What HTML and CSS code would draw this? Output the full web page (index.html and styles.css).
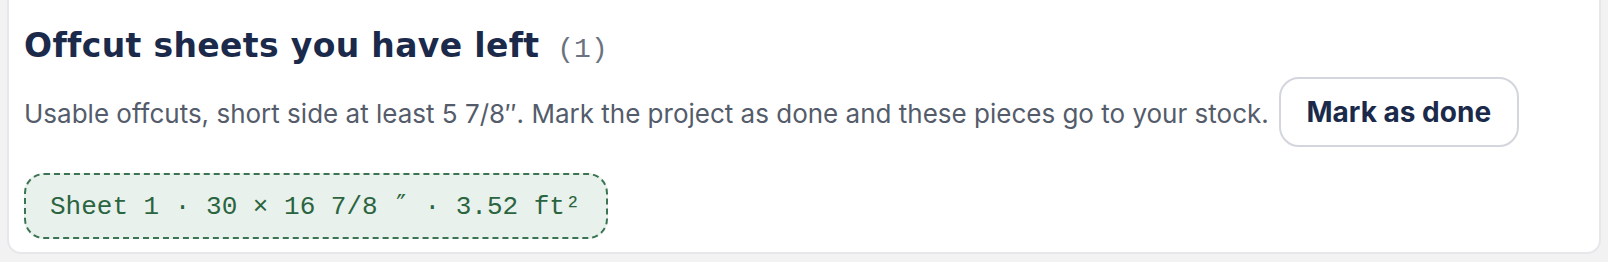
FILE: index.html
```html
<!DOCTYPE html>
<html lang="en">
<head>
<meta charset="utf-8">
<title>Offcut sheets</title>
<link rel="stylesheet" href="styles.css">
</head>
<body>
<section class="card">
  <h2 class="title">Offcut sheets you have left <span class="count">(1)</span></h2>
  <div class="row">
    <p class="desc">Usable offcuts, short side at least 5 7/8″. Mark the project as done and these pieces go to your stock.</p>
    <button class="btn" type="button">Mark as done</button>
  </div>
  <div class="chips">
    <span class="chip">Sheet 1 · 30 × 16 7/8 <span class="prime">″</span> · 3.52 ft²</span>
  </div>
</section>
</body>
</html>
```
FILE: styles.css
```css
html, body {
  margin: 0;
  padding: 0;
  background: #f2f2f3;
}
body {
  padding: 0 7px 9px 7px;
  font-family: Inter, "Liberation Sans", sans-serif;
}
.card {
  background: #fff;
  border: 2px solid #e6e7ea;
  border-top: 0;
  border-radius: 0 0 14px 14px;
  padding: 26px 16px 13px 15px;
}
.title {
  margin: 0;
  font-family: "DejaVu Sans", sans-serif;
  font-weight: 700;
  font-size: 33px;
  line-height: 40px;
  letter-spacing: 0.35px;
  color: #1b2a4a;
}
.count {
  font-family: "Liberation Mono", monospace;
  font-weight: 400;
  font-size: 28px;
  letter-spacing: 0;
  color: #6b7280;
  margin-left: 6px;
}
.row {
  display: flex;
  align-items: center;
  gap: 10px;
  margin-top: 7px;
}
.desc {
  margin: 0;
  padding-top: 2px;
  font-family: Inter, sans-serif;
  font-size: 26px;
  color: #545c6b;
}
.btn {
  flex: none;
  font-family: Inter, sans-serif;
  font-weight: 700;
  font-size: 28px;
  color: #1b2a4a;
  background: #fff;
  border: 2px solid #d3d6dc;
  border-radius: 20px;
  width: 240px;
  height: 70px;
  padding: 0;
}
.chips {
  margin-top: 26px;
  display: flex;
}
.chip {
  display: block;
  font-family: "Liberation Mono", monospace;
  font-size: 26px;
  line-height: 30px;
  height: 30px;
  color: #2a6440;
  background: #e8f1eb;
  border: 2px dashed #3a7452;
  border-radius: 20px;
  padding: 17px 25px 15px 24px;
}
.prime {
  font-family: "DejaVu Sans Mono", monospace;
  font-size: 26px;
  line-height: 0;
}
```
